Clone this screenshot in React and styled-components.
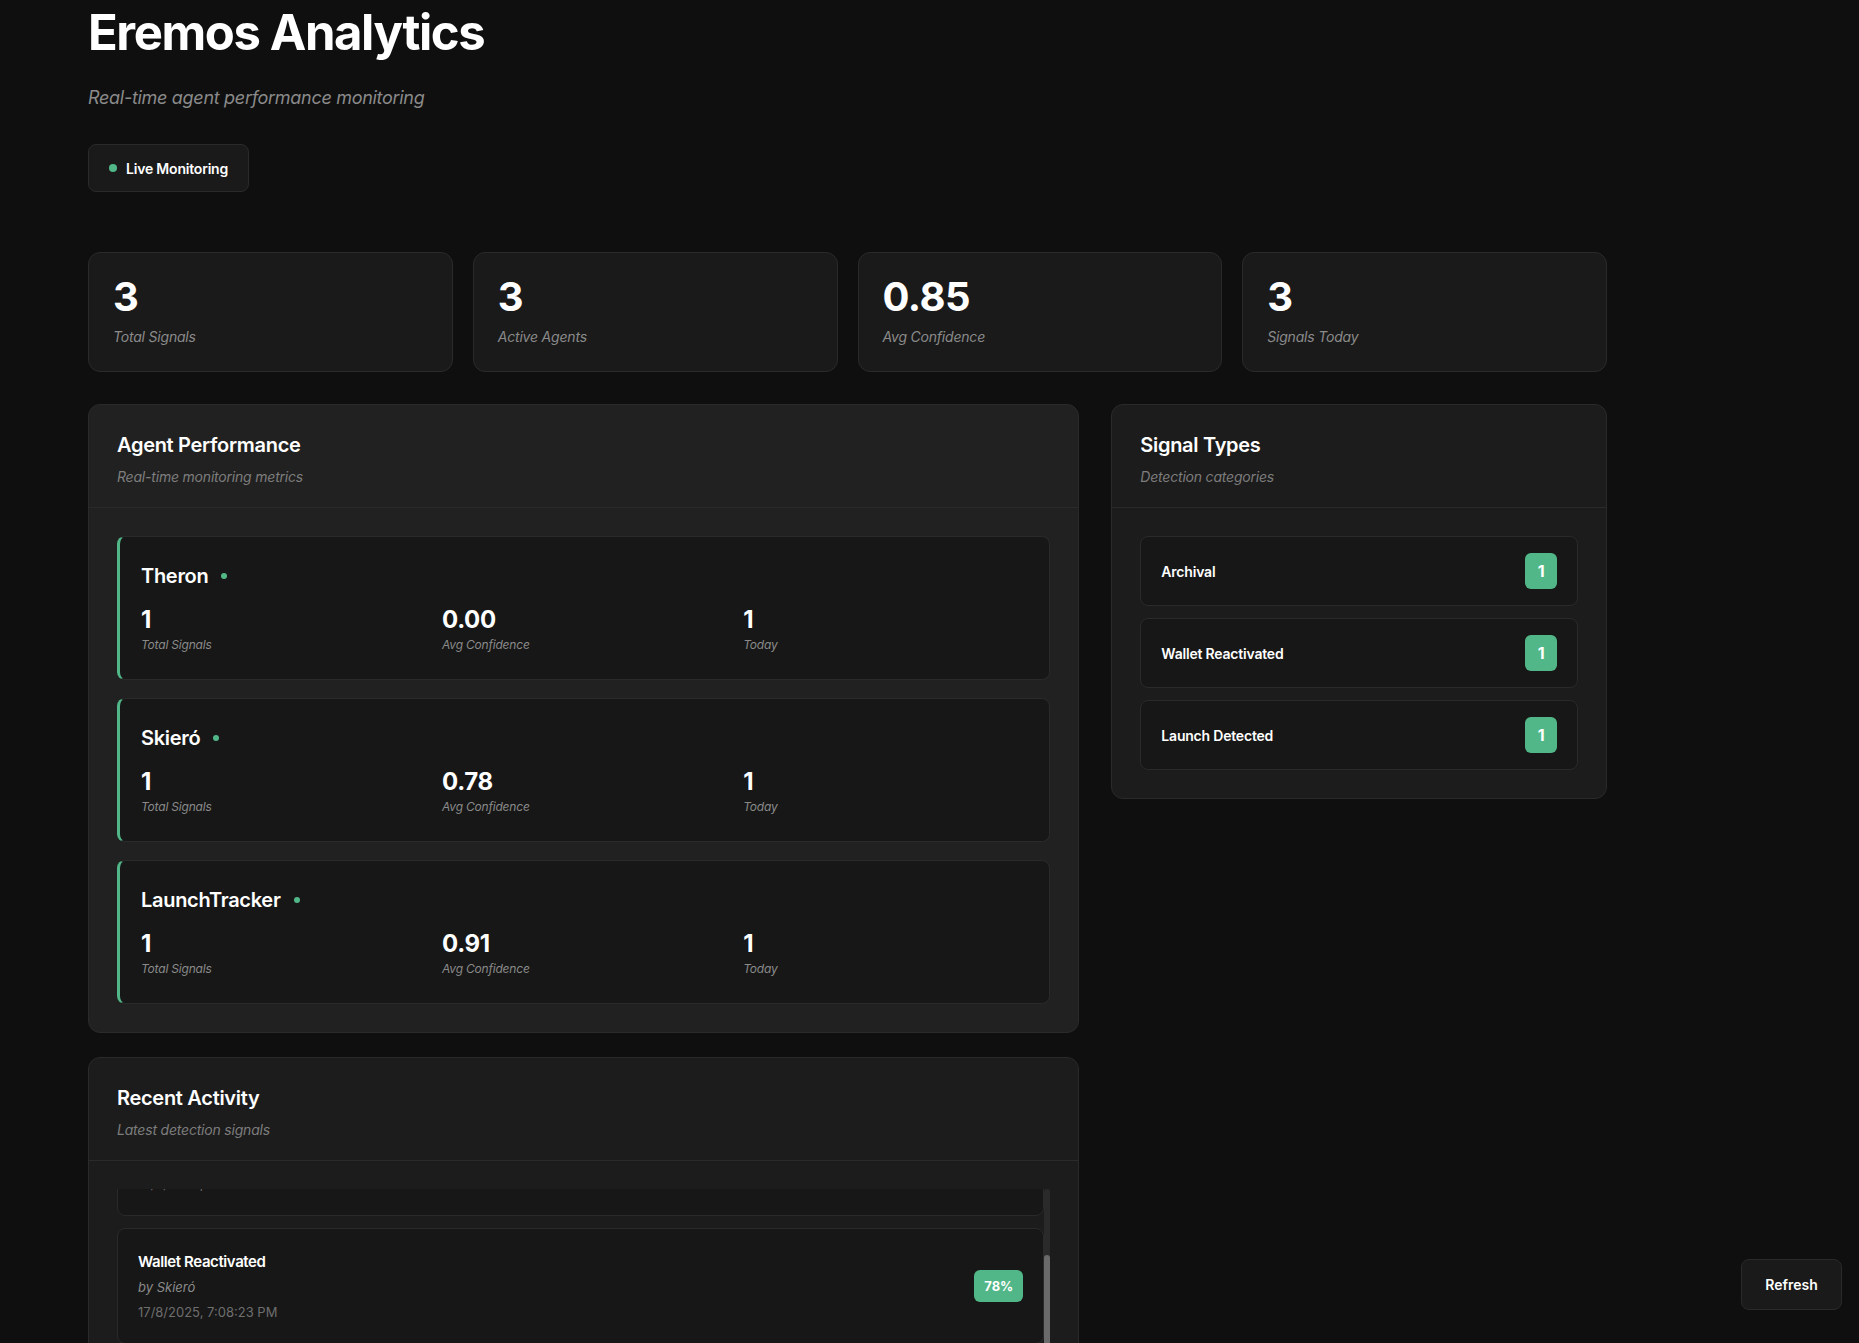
import React, { useLayoutEffect, useRef } from "react";
import styled, { createGlobalStyle } from "styled-components";

const GlobalStyle = createGlobalStyle`
  html, body {
    margin: 0;
    padding: 0;
    background: #0f0f0f;
    color: #ffffff;
    font-family: Inter, "Noto Sans", "Liberation Sans", sans-serif;
    overflow: hidden;
  }
  * { box-sizing: border-box; }
`;

const Page = styled.div`
  padding: 3px 0 0 88px;
  width: 1607px;
`;

const Title = styled.h1`
  margin: 0;
  font-size: 49px;
  line-height: 60px;
  font-weight: 700;
  letter-spacing: -1.4px;
`;

const Subtitle = styled.p`
  margin: 22px 0 0;
  font-size: 18px;
  line-height: 25px;
  font-style: italic;
  color: #8a8a8a;
  letter-spacing: -0.3px;
`;

const LiveBadge = styled.div`
  display: inline-flex;
  align-items: center;
  gap: 9px;
  margin-top: 34px;
  height: 48px;
  padding: 0 20px;
  background: #1a1a1a;
  border: 1px solid #2a2a2a;
  border-radius: 8px;
  font-size: 14px;
  font-weight: 600;
  letter-spacing: -0.2px;
`;

const Dot = styled.span`
  width: ${({ size }) => size || 8}px;
  height: ${({ size }) => size || 8}px;
  border-radius: 50%;
  background: #52b788;
  flex-shrink: 0;
`;

const StatsRow = styled.div`
  display: grid;
  grid-template-columns: repeat(4, 1fr);
  gap: 20px;
  margin-top: 60px;
`;

const StatCard = styled.div`
  background: #1a1a1a;
  border: 1px solid #2a2a2a;
  border-radius: 12px;
  padding: 24px;
  height: 120px;
`;

const StatValue = styled.div`
  font-size: 40px;
  line-height: 40px;
  font-weight: 700;
  letter-spacing: -0.5px;
`;

const StatLabel = styled.div`
  margin-top: 10px;
  font-size: 14px;
  line-height: 20px;
  font-style: italic;
  color: #8a8a8a;
  letter-spacing: -0.2px;
`;

const MainGrid = styled.div`
  display: grid;
  grid-template-columns: 2fr 1fr;
  gap: 32px;
  margin-top: 32px;
  align-items: start;
`;

const Column = styled.div`
  display: flex;
  flex-direction: column;
  gap: 24px;
`;

const Panel = styled.section`
  background: ${({ tone }) => tone || "#1c1c1c"};
  border: 1px solid #2a2a2a;
  border-radius: 12px;
  overflow: hidden;
`;

const PanelHeader = styled.div`
  padding: 28px 28px 20px;
  border-bottom: 1px solid #2a2a2a;
`;

const PanelTitle = styled.h2`
  margin: 0;
  font-size: 20px;
  line-height: 24px;
  font-weight: 600;
  letter-spacing: -0.3px;
`;

const PanelSub = styled.p`
  margin: 10px 0 0;
  font-size: 14px;
  line-height: 20px;
  font-style: italic;
  color: #7d7d7d;
  letter-spacing: -0.2px;
`;

const PanelBody = styled.div`
  padding: 28px;
  display: flex;
  flex-direction: column;
  gap: ${({ gap }) => gap || 12}px;
`;

const AgentCard = styled.div`
  background: #171717;
  border: 1px solid #2a2a2a;
  border-left: 3px solid #52b788;
  border-radius: 8px;
  padding: 24px 21px 26px;
`;

const AgentName = styled.div`
  display: flex;
  align-items: center;
  gap: 13px;
  font-size: 20px;
  line-height: 30px;
  font-weight: 600;
  letter-spacing: -0.3px;
`;

const AgentStats = styled.div`
  display: grid;
  grid-template-columns: repeat(3, 1fr);
  gap: 16px;
  margin-top: 14px;
`;

const MiniValue = styled.div`
  font-size: 24px;
  line-height: 29px;
  font-weight: 700;
  letter-spacing: -0.4px;
`;

const MiniLabel = styled.div`
  margin-top: 3px;
  font-size: 12px;
  line-height: 16px;
  font-style: italic;
  color: #8a8a8a;
  letter-spacing: -0.2px;
`;

const TypeRow = styled.div`
  display: flex;
  align-items: center;
  justify-content: space-between;
  background: #171717;
  border: 1px solid #2a2a2a;
  border-radius: 8px;
  padding: 16px 20px;
  font-size: 14px;
  font-weight: 600;
  letter-spacing: -0.2px;
`;

const Pill = styled.span`
  display: inline-flex;
  align-items: center;
  justify-content: center;
  background: #52b788;
  color: #ffffff;
  border-radius: 6px;
  font-weight: 700;
  min-width: ${({ wide }) => (wide ? 48 : 32)}px;
  height: ${({ wide }) => (wide ? 32 : 36)}px;
  padding: 0 ${({ wide }) => (wide ? 10 : 8)}px;
  font-size: ${({ wide }) => (wide ? 13 : 16)}px;
`;

const ScrollFrame = styled.div`
  display: flex;
  height: 280px;
`;

const ActivityList = styled.div`
  flex: 1;
  min-width: 0;
  overflow-y: scroll;
  scrollbar-width: none;
  display: flex;
  flex-direction: column;
  gap: 12px;

  &::-webkit-scrollbar {
    display: none;
  }
`;

const ScrollTrack = styled.div`
  width: 6px;
  flex-shrink: 0;
  background: #2a2a2a;
  border-radius: 3px;
  overflow: hidden;
`;

const ScrollThumb = styled.div`
  background: #6a6a6a;
  border-radius: 3px;
  width: 100%;
`;

const ActivityItem = styled.div`
  flex-shrink: 0;
  display: flex;
  align-items: center;
  justify-content: space-between;
  background: #171717;
  border: 1px solid #2a2a2a;
  border-radius: 8px;
  padding: 20px;
  min-height: 116px;
`;

const ActivityTitle = styled.div`
  font-size: 15px;
  line-height: 20px;
  font-weight: 600;
  letter-spacing: -0.4px;
`;

const ActivityBy = styled.div`
  margin-top: 6px;
  font-size: 13px;
  line-height: 18px;
  font-style: italic;
  color: #8a8a8a;
`;

const ActivityTime = styled.div`
  margin-top: 7px;
  font-size: 13px;
  line-height: 18px;
  color: #6e6e6e;
`;

const RefreshButton = styled.button`
  position: fixed;
  right: 17px;
  bottom: 33px;
  width: 101px;
  height: 51px;
  background: #1a1a1a;
  border: 1px solid #2a2a2a;
  border-radius: 8px;
  color: #ffffff;
  font-family: inherit;
  font-size: 14px;
  font-weight: 600;
  cursor: pointer;
`;

const stats = [
  { value: "3", label: "Total Signals" },
  { value: "3", label: "Active Agents" },
  { value: "0.85", label: "Avg Confidence" },
  { value: "3", label: "Signals Today" },
];

const agents = [
  { name: "Theron", total: 1, conf: "0.00", today: 1 },
  { name: "Skieró", total: 1, conf: "0.78", today: 1 },
  { name: "LaunchTracker", total: 1, conf: "0.91", today: 1 },
];

const types = ["Archival", "Wallet Reactivated", "Launch Detected"];

const activity = [
  { type: "Launch Detected", by: "LaunchTracker", time: "17/8/2025, 7:08:24 PM", conf: "91%" },
  { type: "Wallet Reactivated", by: "Skieró", time: "17/8/2025, 7:08:23 PM", conf: "78%" },
  { type: "Archival", by: "Theron", time: "17/8/2025, 7:08:22 PM", conf: null },
];

const SCROLL_TOP = 89;

export default function App() {
  const listRef = useRef(null);

  useLayoutEffect(() => {
    if (listRef.current) listRef.current.scrollTop = SCROLL_TOP;
  }, []);

  return (
    <>
      <GlobalStyle />
      <Page>
        <Title>Eremos Analytics</Title>
        <Subtitle>Real-time agent performance monitoring</Subtitle>
        <LiveBadge>
          <Dot />
          Live Monitoring
        </LiveBadge>

        <StatsRow>
          {stats.map((s) => (
            <StatCard key={s.label}>
              <StatValue>{s.value}</StatValue>
              <StatLabel>{s.label}</StatLabel>
            </StatCard>
          ))}
        </StatsRow>

        <MainGrid>
          <Column>
            <Panel tone="#212121">
              <PanelHeader>
                <PanelTitle>Agent Performance</PanelTitle>
                <PanelSub>Real-time monitoring metrics</PanelSub>
              </PanelHeader>
              <PanelBody gap={18}>
                {agents.map((a) => (
                  <AgentCard key={a.name}>
                    <AgentName>
                      {a.name}
                      <Dot size={6} />
                    </AgentName>
                    <AgentStats>
                      <div>
                        <MiniValue>{a.total}</MiniValue>
                        <MiniLabel>Total Signals</MiniLabel>
                      </div>
                      <div>
                        <MiniValue>{a.conf}</MiniValue>
                        <MiniLabel>Avg Confidence</MiniLabel>
                      </div>
                      <div>
                        <MiniValue>{a.today}</MiniValue>
                        <MiniLabel>Today</MiniLabel>
                      </div>
                    </AgentStats>
                  </AgentCard>
                ))}
              </PanelBody>
            </Panel>

            <Panel>
              <PanelHeader>
                <PanelTitle>Recent Activity</PanelTitle>
                <PanelSub>Latest detection signals</PanelSub>
              </PanelHeader>
              <PanelBody>
                <ScrollFrame>
                  <ActivityList ref={listRef}>
                    {activity.map((item) => (
                      <ActivityItem key={item.type}>
                        <div>
                          <ActivityTitle>{item.type}</ActivityTitle>
                          <ActivityBy>by {item.by}</ActivityBy>
                          <ActivityTime>{item.time}</ActivityTime>
                        </div>
                        {item.conf && <Pill wide>{item.conf}</Pill>}
                      </ActivityItem>
                    ))}
                  </ActivityList>
                  <ScrollTrack>
                    <ScrollThumb style={{ marginTop: 66, height: 211 }} />
                  </ScrollTrack>
                </ScrollFrame>
              </PanelBody>
            </Panel>
          </Column>

          <Panel>
            <PanelHeader>
              <PanelTitle>Signal Types</PanelTitle>
              <PanelSub>Detection categories</PanelSub>
            </PanelHeader>
            <PanelBody>
              {types.map((t) => (
                <TypeRow key={t}>
                  {t}
                  <Pill>1</Pill>
                </TypeRow>
              ))}
            </PanelBody>
          </Panel>
        </MainGrid>
      </Page>
      <RefreshButton>Refresh</RefreshButton>
    </>
  );
}
